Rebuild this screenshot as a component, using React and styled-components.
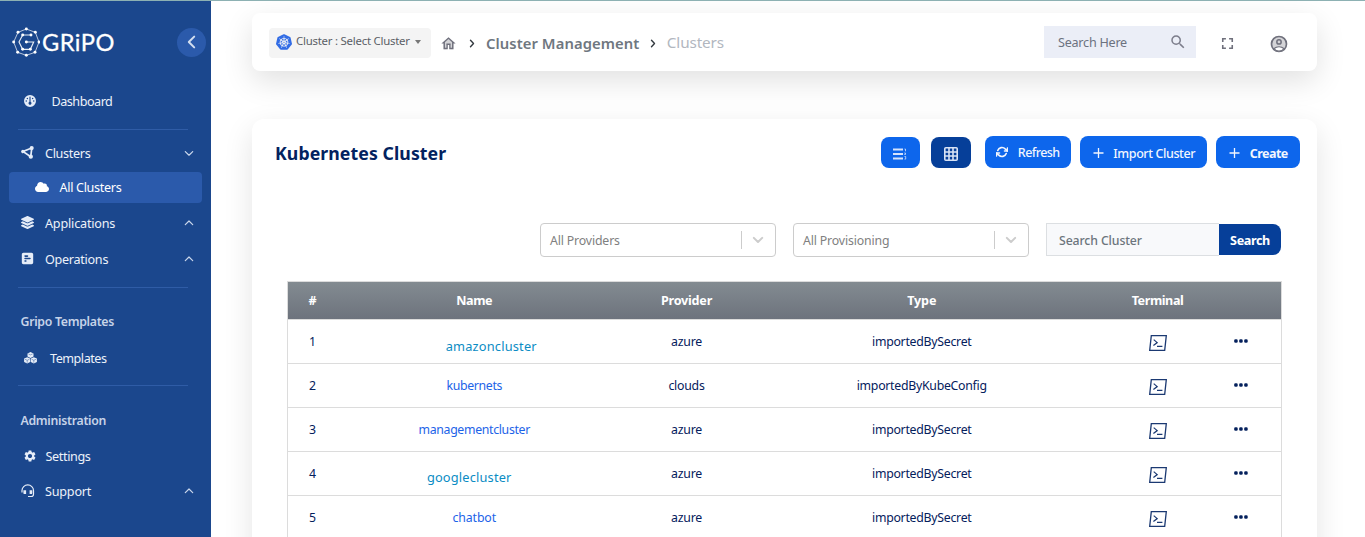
import React from 'react';
import styled, { createGlobalStyle } from 'styled-components';
import { FaCloud, FaLayerGroup } from 'react-icons/fa';
import { FaGauge, FaSquarePollHorizontal } from 'react-icons/fa6';
import { FiRefreshCw } from 'react-icons/fi';
import { SiKubernetes } from 'react-icons/si';
import { MdSettings, MdFullscreen, MdSearch } from 'react-icons/md';

const GlobalStyle = createGlobalStyle`
  * { box-sizing: border-box; }
  body {
    margin: 0;
    overflow: hidden;
    background: #fff;
    color: #04205c;
    font-family: "Noto Sans", "Open Sans", sans-serif;
    font-size: 12.3px;
  }
  svg { display: block; flex: none; }
  button { font-family: inherit; border: 0; padding: 0; cursor: pointer; }
`;

const Page = styled.div`
  display: flex;
  height: 537px;
  border-top: 1px solid #8db1b3;
  overflow: hidden;
`;

/* ---------- Sidebar ---------- */

const Sidebar = styled.nav`
  flex: none;
  width: 211px;
  background: #1b478d;
  color: #edf2fa;
  display: flex;
  flex-direction: column;
`;

const Brand = styled.div`
  height: 82px;
  padding: 0 5px 0 12px;
  display: flex;
  align-items: center;
`;

const BrandName = styled.span`
  margin-left: 2px;
  font: 400 23.6px/28px Lato, sans-serif;
  letter-spacing: 0.5px;
  color: #fff;
  -webkit-text-stroke: 0.3px #fff;
`;

const Collapse = styled.button`
  margin-left: auto;
  width: 29px;
  height: 29px;
  border-radius: 50%;
  background: #2b5aab;
  display: flex;
  align-items: center;
  justify-content: center;
`;

const Divider = styled.div`
  flex: none;
  height: 1px;
  margin: ${(p) => p.$m} 23px 0 18px;
  background: #2f5ca6;
`;

const NavItem = styled.a`
  flex: none;
  height: 36px;
  margin-top: ${(p) => p.$top || 0}px;
  padding: 0 17px 0 ${(p) => p.$x || 21}px;
  display: flex;
  align-items: center;
  font-size: 12.6px;
  letter-spacing: ${(p) => p.$ls || 0}px;
`;

const NavIcon = styled.span`
  width: ${(p) => p.$w}px;
  padding-bottom: ${(p) => p.$lift || 0}px;
  flex: none;
  color: #e6edf8;
`;

const NavChevron = styled.span`
  margin-left: auto;
`;

const SubItem = styled(NavItem)`
  height: 31px;
  margin: 1px 9px 2px;
  padding: 0 0 0 26px;
  border-radius: 4px;
  background: #2b5aab;
  color: #fff;
`;

const NavHeading = styled.div`
  flex: none;
  height: 36px;
  margin-top: 16px;
  padding-left: 20.5px;
  font-size: 12.3px;
  font-weight: 600;
  line-height: ${(p) => p.$line}px;
  letter-spacing: -0.3px;
  color: #c6d3e8;
`;

/* ---------- Header ---------- */

const Main = styled.main`
  flex: 1;
  padding: 12px 48px 0 41px;
  display: flex;
  flex-direction: column;
`;

const HeaderCard = styled.header`
  flex: none;
  height: 58px;
  padding: 0 28px 0 17px;
  display: flex;
  align-items: center;
  border-radius: 8px;
  background: #fff;
  box-shadow: 0 10px 30px rgba(0, 0, 0, 0.12);
`;

const ClusterSelect = styled.div`
  width: 162px;
  height: 30px;
  margin-top: 1px;
  padding: 0 10px 3px 7px;
  display: flex;
  align-items: center;
  border-radius: 4px;
  background: #f4f4f4;
  color: #5b5f66;
  font-size: 11.4px;
  letter-spacing: -0.23px;
  white-space: nowrap;
`;

const SelectText = styled.span`
  flex: 1;
  margin: -1px 0 0 4px;
`;

const KubeIcon = styled(SiKubernetes)`
  color: #326ce5;
  margin-top: 2px;
`;

const Caret = styled.span`
  border: 3.5px solid transparent;
  border-top: 4px solid #777;
  border-bottom: 0;
  margin-top: 2px;
`;

const Crumbs = styled.div`
  display: flex;
  align-items: center;
  margin-left: 9px;
  color: #6f7780;
  white-space: nowrap;
`;

const Crumb = styled.span`
  margin: 1px 11px 0 11px;
  font-size: 14.8px;
  font-weight: 600;
  letter-spacing: 0.07px;
`;

const CurrentCrumb = styled.span`
  margin-left: 10.5px;
  padding-bottom: 1px;
  font-size: 15.3px;
  letter-spacing: -0.13px;
  color: #b2b7bf;
`;

const HeaderSearch = styled.div`
  width: 152px;
  height: 32px;
  margin: 0 22px 0 auto;
  padding: 0 9px 0 14px;
  display: flex;
  align-items: center;
  justify-content: space-between;
  background: #ebeef7;
  color: #6c7280;
  font-size: 12.6px;
  letter-spacing: -0.24px;
`;

const HeaderIcon = styled.span`
  margin: 3px 0 0 ${(p) => p.$gap || 0}px;
  color: #6f707c;
`;

/* ---------- Content ---------- */

const ContentCard = styled.section`
  flex: none;
  height: 460px;
  margin-top: 48px;
  border-radius: 12px;
  background: #fff;
  box-shadow: 0 10px 30px rgba(0, 0, 0, 0.11);
`;

const TitleBar = styled.div`
  display: flex;
  align-items: flex-end;
  padding: 17px 17px 0 23px;
`;

const Title = styled.h1`
  margin: 0 auto 2px 0;
  font-size: 17.7px;
  font-weight: 700;
  line-height: 26px;
  letter-spacing: 0.08px;
  color: #03225f;
`;

const Button = styled.button`
  width: ${(p) => p.$w}px;
  height: ${(p) => p.$h || 32}px;
  margin-left: ${(p) => p.$gap}px;
  padding: ${(p) => p.$drop || 0}px ${(p) => p.$pull || 0}px 0 0;
  display: flex;
  align-items: center;
  justify-content: center;
  gap: 9.5px;
  border-radius: 8px;
  background: ${(p) => (p.$dark ? '#063f99' : '#0d66ec')};
  color: #f2f6fe;
  font-size: 12.5px;
  font-weight: ${(p) => p.$weight || 500};
  letter-spacing: ${(p) => p.$ls || 0}px;
  white-space: nowrap;
`;

const Filters = styled.div`
  display: flex;
  justify-content: flex-end;
  gap: 17px;
  padding: 55px 36px 0 0;
`;

const Dropdown = styled.div`
  width: 236px;
  height: 34px;
  padding-left: 9px;
  display: flex;
  align-items: center;
  border: 1px solid #ccc;
  border-radius: 4px;
  color: #808080;
  font-size: 12.3px;
  letter-spacing: -0.15px;
`;

const DropdownArrow = styled.span`
  height: 18px;
  width: 34px;
  margin-left: auto;
  padding-right: 1px;
  display: flex;
  align-items: center;
  justify-content: center;
  border-left: 1px solid #ccc;
`;

const SearchGroup = styled.div`
  display: flex;
  align-items: center;
  height: 33px;
`;

const SearchField = styled.div`
  width: 173px;
  height: 33px;
  padding-left: 12px;
  line-height: 33px;
  border: 1px solid #dcdfe2;
  border-right: 0;
  background: #f8f9fb;
  color: #6c757d;
  font-weight: 500;
  letter-spacing: -0.12px;
`;

const SearchButton = styled.button`
  width: 62px;
  height: 31px;
  padding-top: 1px;
  border-radius: 0 8px 8px 0;
  background: #063f99;
  color: #fff;
  font-size: 12.6px;
  font-weight: 700;
  letter-spacing: -0.38px;
`;

/* ---------- Table ---------- */

const Table = styled.div`
  width: 995px;
  margin: 24px 0 0 35px;
  border: 1px solid #dcdcdc;
`;

const Row = styled.div`
  display: grid;
  grid-template-columns: 49px 274.5px 150px 320.5px 151px 48px;
  align-items: center;
  height: 44px;
  border-bottom: 1px solid #dcdcdc;
`;

const HeadRow = styled(Row)`
  height: 38px;
  background: linear-gradient(#838b91, #6d737d);
  color: #fff;
  font-size: 12.6px;
  font-weight: 700;
`;

const Cell = styled.div`
  text-align: center;
  letter-spacing: ${(p) => p.$ls || 0}px;
`;

const NameLink = styled.a`
  color: #1c63e8;
  letter-spacing: ${(p) => p.$ls}px;
`;

const ProviderLink = styled(NameLink)`
  display: block;
  font-size: 12.8px;
  color: #0b8cc4;
  padding-top: ${(p) => p.$drop}px;
  margin-left: ${(p) => p.$shift}px;
`;

const IconCell = styled.div`
  display: flex;
  justify-content: center;
  padding: ${(p) => p.$pad};
`;

/* ---------- Drawings ---------- */

const LogoMark = () => (
  <svg width="28" height="30" viewBox="-1 -1 84 90" fill="none" stroke="#fff">
    <path
      strokeWidth="2.6"
      strokeOpacity=".8"
      d="M42 5 69 15 80 44 68 75 42 84 16 75 4 44 17 15Z"
    />
    <path strokeWidth="3.4" strokeOpacity=".9" d="M56 23H31L20 44l11 22h23l10-22H42" />
    <g fill="#fff" stroke="none">
      {[[42, 5], [69, 15], [80, 44], [68, 75], [42, 84], [16, 75], [4, 44], [17, 15], [56, 23], [31, 66], [54, 66], [42, 44], [31, 23]].map(
        ([x, y]) => (
          <circle key={`${x}-${y}`} cx={x} cy={y} r="4.4" />
        )
      )}
    </g>
  </svg>
);

const Chevron = ({ d, w, h, color, stroke = 1.2 }) => (
  <svg width={w} height={h} viewBox={`0 0 ${w} ${h}`} fill="none" stroke={color} strokeWidth={stroke} strokeLinecap="round" strokeLinejoin="round">
    <path d={d} />
  </svg>
);
const Up = () => <Chevron w={10} h={6} d="M1.3 4.6 5 1l3.7 3.6" color="#cbd8ec" />;
const Down = () => <Chevron w={10} h={5} d="M1.3.6 5 4.2 8.7.6" color="#cbd8ec" />;
const Next = () => <Chevron w={6} h={9} d="M1.5 1.2l3 3.3-3 3.3" color="#343a40" stroke={1.4} />;
const SelectArrow = () => <Chevron w={12} h={8} d="M1.8 1.9 6 6l4.2-4.1" color="#ccc" stroke={2} />;

const HomeGlyph = () => (
  <svg width="17" height="17" viewBox="0 0 24 24" fill="currentColor">
    <path opacity=".3" d="M5 12v8h4v-6h6v6h4v-8l-7-7z" />
    <path d="M12 3 2 12h3v8h6v-6h2v6h6v-8h3L12 3zm5 15h-2v-6H9v6H7v-7.8l5-4.5 5 4.5V18z" />
  </svg>
);

const AccountGlyph = () => (
  <svg width="20" height="20" viewBox="0 0 24 24" fill="none" stroke="currentColor" strokeWidth="2">
    <circle cx="12" cy="12" r="9" fill="currentColor" fillOpacity=".3" />
    <path d="M5.8 17.6c3.6-2.8 8.8-2.8 12.4 0-3.3 4-9.1 4-12.4 0z" fill="#fff" strokeWidth="1.5" />
    <circle cx="12" cy="9.5" r="2.6" strokeWidth="1.8" />
  </svg>
);

const ClusterGlyph = () => (
  <svg width="13" height="13" viewBox="0 0 13 13" fill="#e6edf8" stroke="#e6edf8" strokeWidth="1.7">
    <path fill="none" d="M10.8 2 2 5.5l7.7 5.3z" />
    <circle cx="10.7" cy="2.1" r="1.2" />
    <circle cx="1.9" cy="5.5" r=".9" />
    <circle cx="9.8" cy="10.7" r="1.3" />
  </svg>
);

const CubesGlyph = () => (
  <svg width="13" height="12" viewBox="0 0 13 12" fill="#e6edf8">
    <path d="M6.5 0l3 1.4v3.2l-3 1.5-3-1.5V1.4zM3.2 5.2l3 1.4v3.3l-3 1.5-3.1-1.5V6.6zM9.8 5.2l3.1 1.4v3.3l-3.100 1.5-3-1.500V6.600z" />
    <path fill="none" stroke="#1b478d" strokeOpacity=".75" strokeWidth=".6" d="M4.300 1.900l2.200 1 2.200-1M3.200 8.300v2.500M.9 7.200l2.300 1.100 2.300-1.100M9.800 8.300v2.500M7.500 7.200l2.300 1.100 2.300-1.100" />
  </svg>
);

const SupportGlyph = () => (
  <svg width="14" height="14" viewBox="0 0 14 14" fill="none" stroke="#e6edf8" strokeWidth="1.2">
    <path d="M1 8.500V6.500a5.700 5.500 0 0 1 11.500 0v3.800q0 2.200-2.200 2.200H7" />
    <path d="M2.400 6.300h2.700v3.800H3.600q-1.200 0-1.200-1.200zM8.600 6.300h2.700v2.600q0 1.200-1.200 1.200H8.600z" fill="#e6edf8" stroke="none" />
  </svg>
);

const ListGlyph = () => (
  <svg width="14" height="12" viewBox="0 0 14 12" fill="none" stroke="#d5e3fc">
    <path strokeWidth="1.8" d="M0 1.5h10M0 6h10M0 10.5h10" />
    <path strokeWidth="1" strokeOpacity=".8" d="M11.5 1h1v2.3M11.3 5h1.2v1.5h-1.2M11.5 8.5h1.2v2.6h-1.2" />
  </svg>
);

const GridGlyph = () => (
  <svg width="14" height="14" viewBox="0 0 14 14" fill="none" stroke="#d9e3f5" strokeWidth="1.6">
    <rect x=".8" y=".8" width="12.4" height="12.4" rx="1" />
    <path d="M5 .8v12.4M9 .8v12.4M.8 5h12.4M.8 9h12.4" />
  </svg>
);

const Plus = () => (
  <svg width="12" height="12" viewBox="0 0 12 12" stroke="#f2f6fe" strokeWidth="1.3">
    <path d="M6.5 1v10M1.5 6h10" />
  </svg>
);

const TerminalGlyph = () => (
  <svg width="20" height="18" viewBox="0 0 20 18" fill="none" stroke="#1b3972" strokeWidth="1.3">
    <path d="M3.3 1.6h15L16.7 16.4h-15z" />
    <path d="M5.7 5.6 9.2 8.6 5.4 11.4M9 12.3h5.4" strokeWidth="1.2" />
  </svg>
);

const Dots = () => (
  <svg width="14" height="4" viewBox="0 0 14 4" fill="#04205c">
    <rect x=".2" y=".2" width="3.5" height="3.5" rx="1.3" />
    <rect x="5.2" y=".2" width="3.5" height="3.5" rx="1.3" />
    <rect x="10.2" y=".2" width="3.5" height="3.5" rx="1.3" />
  </svg>
);

/* ---------- Data ---------- */

const clusters = [
  { name: 'amazoncluster', alt: { ls: 0.2, drop: 9, shift: 34 }, provider: 'azure', type: 'importedBySecret' },
  { name: 'kubernets', ls: -0.33, provider: 'clouds', type: 'importedByKubeConfig' },
  { name: 'managementcluster', ls: -0.32, provider: 'azure', type: 'importedBySecret' },
  { name: 'googlecluster', alt: { ls: 0.18, drop: 7, shift: -10 }, provider: 'azure', type: 'importedBySecret' },
  { name: 'chatbot', ls: -0.1, provider: 'azure', type: 'importedBySecret' },
];

export default function App() {
  return (
    <>
      <GlobalStyle />
      <Page>
        <Sidebar>
          <Brand>
            <LogoMark />
            <BrandName>GRiPO</BrandName>
            <Collapse>
              <Chevron w={10} h={14} d="M7.2 1.6 1.8 7l5.4 5.4" color="#d3def0" stroke={2} />
            </Collapse>
          </Brand>
          <NavItem $x={24} $ls={-0.48}>
            <NavIcon $w={27.5}><FaGauge size={12} /></NavIcon>
            Dashboard
          </NavItem>
          <Divider $m="10px" />
          <NavItem $top={5} $ls={-0.3}>
            <NavIcon $w={24} $lift={2}><ClusterGlyph /></NavIcon>
            Clusters
            <NavChevron><Down /></NavChevron>
          </NavItem>
          <SubItem $ls={-0.32}>
            <NavIcon $w={24.5} $lift={2}><FaCloud size={14} color="#fff" /></NavIcon>
            All Clusters
          </SubItem>
          <NavItem $ls={-0.18}>
            <NavIcon $w={24} $lift={2}><FaLayerGroup size={13} /></NavIcon>
            Applications
            <NavChevron><Up /></NavChevron>
          </NavItem>
          <NavItem $ls={-0.28}>
            <NavIcon $w={24} $lift={2}><FaSquarePollHorizontal size={13} /></NavIcon>
            Operations
            <NavChevron><Up /></NavChevron>
          </NavItem>
          <Divider $m="10px" />
          <NavHeading $line={35}>Gripo Templates</NavHeading>
          <NavItem $x={24} $ls={-0.47}>
            <NavIcon $w={26} $lift={1}><CubesGlyph /></NavIcon>
            Templates
          </NavItem>
          <Divider $m="9px" />
          <NavHeading $line={37}>Administration</NavHeading>
          <NavItem $x={23} $ls={-0.36}>
            <NavIcon $w={22.5} $lift={1}><MdSettings size={14} /></NavIcon>
            Settings
          </NavItem>
          <NavItem $top={-1} $ls={-0.2}>
            <NavIcon $w={24} $lift={1}><SupportGlyph /></NavIcon>
            Support
            <NavChevron><Up /></NavChevron>
          </NavItem>
        </Sidebar>

        <Main>
          <HeaderCard>
            <ClusterSelect>
              <KubeIcon size={16} />
              <SelectText>Cluster : Select Cluster</SelectText>
              <Caret />
            </ClusterSelect>
            <Crumbs>
              <HeaderIcon><HomeGlyph /></HeaderIcon>
              <HeaderIcon $gap={12}><Next /></HeaderIcon>
              <Crumb>Cluster Management</Crumb>
              <HeaderIcon><Next /></HeaderIcon>
              <CurrentCrumb>Clusters</CurrentCrumb>
            </Crumbs>
            <HeaderSearch>
              Search Here
              <MdSearch size={18} color="#7c7d8b" />
            </HeaderSearch>
            <HeaderIcon><MdFullscreen size={19} /></HeaderIcon>
            <HeaderIcon $gap={32}><AccountGlyph /></HeaderIcon>
          </HeaderCard>

          <ContentCard>
            <TitleBar>
              <Title>Kubernetes Cluster</Title>
              <Button $w={39} $h={31} $drop={2} $pull={1}><ListGlyph /></Button>
              <Button $w={40} $h={31} $gap={11} $drop={2} $dark><GridGlyph /></Button>
              <Button $w={86} $gap={14} $ls={-0.55}><FiRefreshCw size={12} strokeWidth={3.2} />Refresh</Button>
              <Button $w={127} $gap={9} $drop={2} $ls={-0.4}><Plus />Import Cluster</Button>
              <Button $w={84} $gap={9} $drop={2} $weight={700} $ls={-0.52}><Plus />Create</Button>
            </TitleBar>

            <Filters>
              <Dropdown>All Providers<DropdownArrow><SelectArrow /></DropdownArrow></Dropdown>
              <Dropdown>All Provisioning<DropdownArrow><SelectArrow /></DropdownArrow></Dropdown>
              <SearchGroup>
                <SearchField>Search Cluster</SearchField>
                <SearchButton>Search</SearchButton>
              </SearchGroup>
            </Filters>

            <Table>
              <HeadRow>
                <Cell>#</Cell>
                <Cell $ls={-0.42}>Name</Cell>
                <Cell $ls={-0.22}>Provider</Cell>
                <Cell $ls={-0.14}>Type</Cell>
                <Cell $ls={-0.42}>Terminal</Cell>
              </HeadRow>
              {clusters.map((c, i) => (
                <Row key={c.name}>
                  <Cell>{i + 1}</Cell>
                  <Cell>
                    {c.alt ? (
                      <ProviderLink $ls={c.alt.ls} $drop={c.alt.drop} $shift={c.alt.shift}>{c.name}</ProviderLink>
                    ) : (
                      <NameLink $ls={c.ls}>{c.name}</NameLink>
                    )}
                  </Cell>
                  <Cell $ls={-0.22}>{c.provider}</Cell>
                  <Cell $ls={-0.27}>{c.type}</Cell>
                  <IconCell $pad="3px 0 0"><TerminalGlyph /></IconCell>
                  <IconCell $pad="0 32px 1px 0"><Dots /></IconCell>
                </Row>
              ))}
            </Table>
          </ContentCard>
        </Main>
      </Page>
    </>
  );
}
